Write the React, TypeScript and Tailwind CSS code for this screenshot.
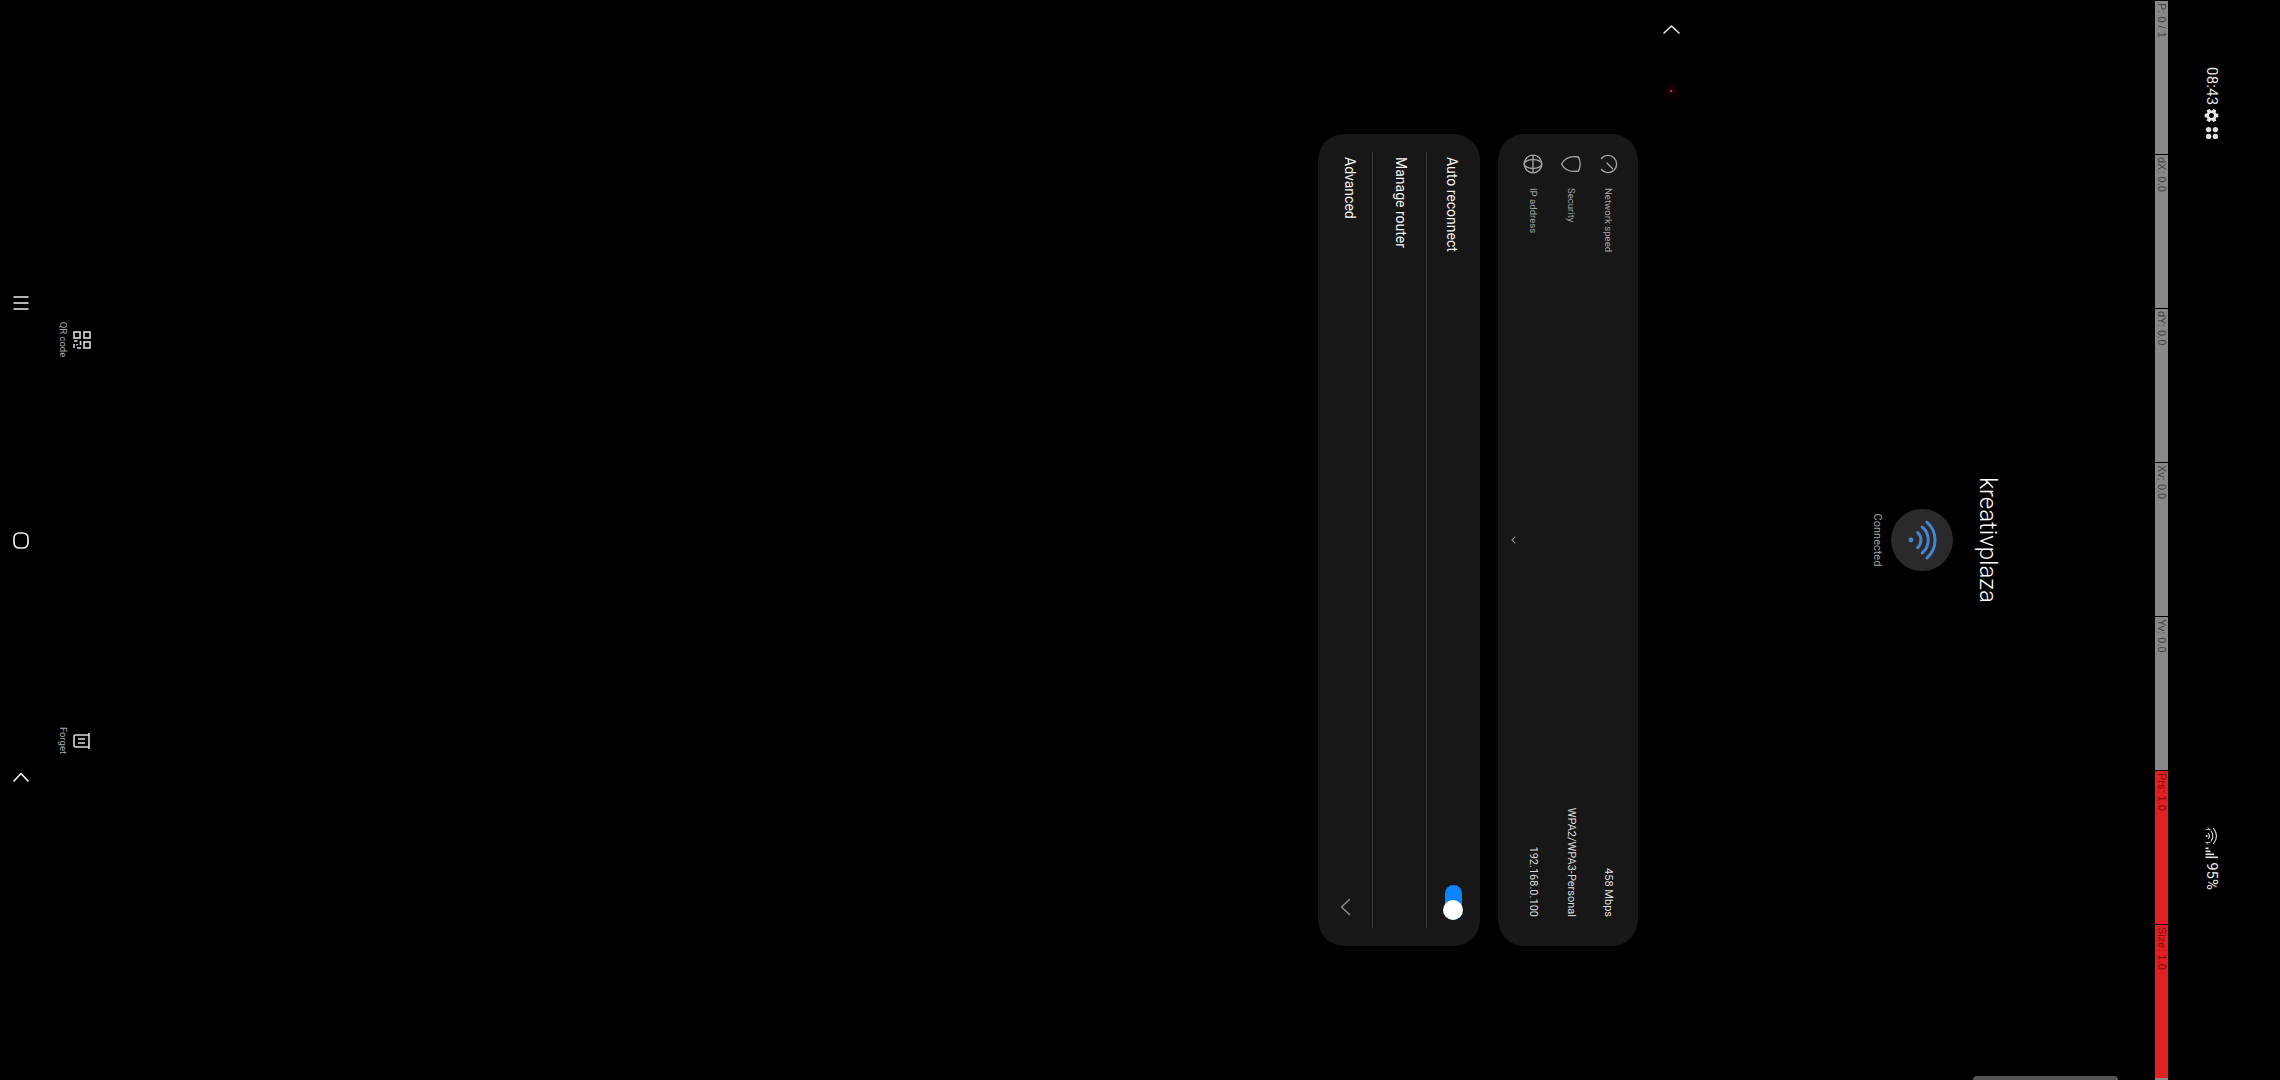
import { MdSettings } from 'react-icons/md';

const debugCells = [
  { label: 'P: 0 / 1', red: false },
  { label: 'dX: 0.0', red: false },
  { label: 'dY: 0.0', red: false },
  { label: 'Xv: 0.0', red: false },
  { label: 'Yv: 0.0', red: false },
  { label: 'Prs: 1.0', red: true },
  { label: 'Size: 1.0', red: true },
];

const infoRows = [
  { label: 'Network speed', value: '458 Mbps', icon: 'speed' },
  { label: 'Security', value: 'WPA2/WPA3-Personal', icon: 'shield' },
  { label: 'IP address', value: '192.168.0.100', icon: 'globe' },
];

function InfoIcon({ name }: { name: string }) {
  if (name === 'speed') {
    return (
      <svg width="20" height="20" viewBox="0 0 20 20" fill="none" stroke="#a8a8a8" strokeWidth="1.3" strokeLinecap="round">
        <path d="M4.5 16.6A8.6 8.6 0 1 1 15.5 16.6" />
        <path d="M9 11L14.5 5.5" />
      </svg>
    );
  }
  if (name === 'shield') {
    return (
      <svg width="20" height="22" viewBox="0 0 20 22" fill="none" stroke="#a8a8a8" strokeWidth="1.3" strokeLinejoin="round">
        <path d="M3 3.5C7 1.6 13 1.6 17 3.5C18 9 17.6 16.5 10 20.5C2.4 16.5 2 9 3 3.5Z" />
      </svg>
    );
  }
  return (
    <svg width="20" height="20" viewBox="0 0 20 20" fill="none" stroke="#a8a8a8" strokeWidth="1.3">
      <circle cx="10" cy="10" r="8.8" />
      <ellipse cx="10" cy="10" rx="4.4" ry="8.8" />
      <path d="M1.2 10H18.8" />
    </svg>
  );
}

export default function App() {
  return (
    <div className="w-[2280px] h-[1080px] overflow-hidden bg-black">
      {/* the device was captured sideways, so the portrait page is turned a quarter */}
      <div className="relative flex flex-col w-[1080px] h-[2280px] origin-top-left rotate-90 translate-x-[2280px] pt-[56px] bg-black font-[Roboto,sans-serif]">
        <div className="flex items-center h-6 pl-[67px] pr-[190px] text-[#e6e6e6]">
          <span className="text-[15px] leading-6 w-[35px] tracking-[0.2px]">08:43</span>
          <MdSettings className="ml-[5px] w-[17px] h-[17px]" />
          <svg className="ml-[2px]" width="14" height="14" viewBox="0 0 14 14" fill="#dedede">
            <circle cx="3.6" cy="3.6" r="2.7" />
            <circle cx="10.4" cy="3.6" r="2.7" />
            <circle cx="3.6" cy="10.4" r="2.7" />
            <circle cx="10.4" cy="10.4" r="2.7" />
          </svg>
          <svg className="ml-auto" width="18" height="14" viewBox="0 0 18 14" fill="none" stroke="#dedede" strokeWidth="1.1" strokeLinecap="round">
            <path d="M1.5 5.5A11 11 0 0 1 16.5 5.5" />
            <path d="M4 8A7.5 7.5 0 0 1 14 8" />
            <path d="M6.5 10.5A4 4 0 0 1 11.5 10.5" />
            <circle cx="9" cy="12.4" r="1.1" fill="#dedede" stroke="none" />
            <path d="M2.5 9V13M0.8 11.2L2.5 9M15.5 13V9M17.2 11L15.5 13" strokeWidth="0.8" />
          </svg>
          <svg className="ml-[1px]" width="13" height="14" viewBox="0 0 13 14" fill="#e6e6e6">
            <rect x="1.5" y="10.5" width="1.6" height="3" />
            <rect x="4.5" y="8.5" width="1.6" height="5" />
            <rect x="7.5" y="5" width="1.6" height="8.5" />
            <rect x="10.5" y="1" width="1.6" height="12.5" />
          </svg>
          <span className="ml-[3px] text-[15px] leading-6">95%</span>
        </div>

        <div className="grid grid-cols-[repeat(7,154px)] mt-8 h-[13px] bg-[#888888]">
          {debugCells.map((cell) => (
            <div
              key={cell.label}
              className={
                cell.red
                  ? 'pl-[2px] text-[11px] leading-[13px] border-l border-black bg-[#e1201f] text-[#800f0f] font-[Liberation_Sans,sans-serif]'
                  : 'pl-[2px] text-[11px] leading-[13px] border-l border-black text-[#444444] font-[Liberation_Sans,sans-serif]'
              }
            >
              {cell.label}
            </div>
          ))}
        </div>

        <div className="mt-[153px] text-center text-[24px] leading-7 font-light text-white">kreativplaza</div>

        <div className="mt-[21px] self-center w-[62px] h-[62px] rounded-full bg-[#2a2a2a]">
          <svg width="62" height="62" viewBox="0 0 62 62" fill="none" stroke="#4585cf" strokeWidth="3" strokeLinecap="round">
            <circle cx="31" cy="42" r="2.4" fill="#4585cf" stroke="none" />
            <path d="M23.5 35.4A10 10 0 0 1 38.5 35.4" />
            <path d="M18 30.8A17 17 0 0 1 44 30.8" />
            <path d="M13 26.1A24 24 0 0 1 49 26.1" />
          </svg>
        </div>
        <div className="mt-[6px] text-center text-[11px] leading-4 text-[#a0a0a0]">Connected</div>

        <div className="flex items-center mt-[189px] h-[17px] pl-[25px]">
          <svg width="9" height="17" viewBox="0 0 9 17" fill="none" stroke="#e8e8e8" strokeWidth="1.6" strokeLinecap="round" strokeLinejoin="round">
            <path d="M8 1L1 8.5L8 16" />
          </svg>
          <div className="ml-[56px] w-[2px] h-[2px] bg-[#c03040] shadow-[0_0_6px_3px_rgba(110,0,20,0.45)]"></div>
        </div>

        <div className="flex flex-col mt-[25px] mx-[134px] h-[140px] pt-[11px] rounded-[26px] bg-[#171717]">
          {infoRows.map((row) => (
            <div key={row.label} className="flex items-center h-[37.5px] pl-[18px] pr-[29px]">
              <div className="flex justify-center w-6">
                <InfoIcon name={row.icon} />
              </div>
              <span className="ml-[12px] text-[9.6px] text-[#a0a0a0]">{row.label}</span>
              <span className="ml-auto text-[11px] text-[#dcdcdc]">{row.value}</span>
            </div>
          ))}
          <div className="flex justify-center items-center h-[2px]">
            <svg width="8" height="5" viewBox="0 0 8 5" fill="none" stroke="#8c8c8c" strokeWidth="1.1">
              <path d="M0.7 0.7L4 4L7.3 0.7" />
            </svg>
          </div>
        </div>

        <div className="flex flex-col mt-[18px] mx-[134px] h-[162px] px-[18px] rounded-[26px] bg-[#171717] text-[14px] text-[#f4f4f4]">
          <div className="flex items-center justify-between h-[54px] pl-[5px] pr-[8px] border-b border-[#3a3a3a]">
            <span className="mt-[3px]">Auto reconnect</span>
            <div className="relative w-[35px] h-[17px] rounded-full bg-[#0a84ff]">
              <div className="absolute right-0 top-[-1.5px] w-5 h-5 rounded-full bg-white"></div>
            </div>
          </div>
          <div className="flex items-center h-[54px] pl-[5px] border-b border-[#3a3a3a]">
            <span className="mb-[3px]">Manage router</span>
          </div>
          <div className="flex items-center justify-between h-[54px] pl-[5px] pr-[12px]">
            <span className="mb-[10px]">Advanced</span>
            <svg className="mb-[2px]" width="18" height="11" viewBox="0 0 18 11" fill="none" stroke="#8c8c8c" strokeWidth="1.5" strokeLinecap="round" strokeLinejoin="round">
              <path d="M1.5 1.5L9 9.5L16.5 1.5" />
            </svg>
          </div>
        </div>

        <div className="mt-auto">
          <div className="grid grid-cols-2 mx-[139px] text-[9.5px] leading-[12px] text-[#a6a6a6]">
            <div className="flex flex-col items-center gap-[4px]">
              <svg width="18" height="18" viewBox="0 0 18 18" fill="none" stroke="#dcdcdc" strokeWidth="1.6">
                <rect x="1" y="1" width="6" height="6" />
                <rect x="11" y="1" width="6" height="6" />
                <rect x="1" y="11" width="6" height="6" />
                <path d="M10 10.5H14M17 10V14M10 13.5V17M13 17H17M13 14H14.5" />
              </svg>
              <span>QR code</span>
            </div>
            <div className="flex flex-col items-center gap-[4px]">
              <svg width="18" height="18" viewBox="0 0 18 18" fill="none" stroke="#dcdcdc" strokeWidth="1.6">
                <path d="M1 2H17" />
                <path d="M3 2V15.5Q3 17 4.5 17H13.5Q15 17 15 15.5V2" />
                <path d="M7 6V13M11 6V13" />
              </svg>
              <span>Forget</span>
            </div>
          </div>

          <div className="grid grid-cols-3 w-[711px] mx-auto mt-[28px] mb-[13px]">
            <div className="flex justify-center">
              <svg width="16" height="16" viewBox="0 0 16 16" fill="none" stroke="#eeeeee" strokeWidth="1.7">
                <path d="M2 0.5V15.5M8 0.5V15.5M14 0.5V15.5" />
              </svg>
            </div>
            <div className="flex justify-center">
              <svg width="17" height="16" viewBox="0 0 17 16" fill="none" stroke="#eeeeee" strokeWidth="1.7">
                <rect x="1" y="1" width="15" height="14" rx="5" />
              </svg>
            </div>
            <div className="flex justify-center">
              <svg width="10" height="16" viewBox="0 0 10 16" fill="none" stroke="#eeeeee" strokeWidth="1.7" strokeLinecap="round" strokeLinejoin="round">
                <path d="M9 1L1.5 8L9 15" />
              </svg>
            </div>
          </div>
        </div>

        <div className="absolute right-0 top-[162px] w-1 h-[145px] rounded-l-sm bg-[#555555]"></div>
      </div>
    </div>
  );
}
